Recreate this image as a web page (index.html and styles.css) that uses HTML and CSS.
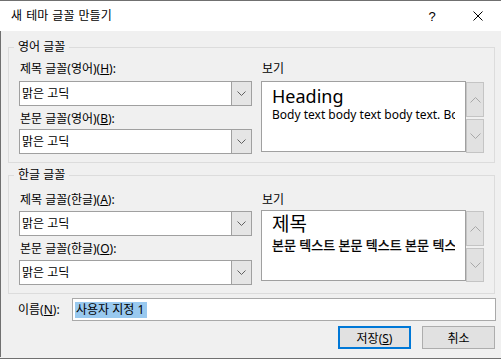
FILE: index.html
```html
<!DOCTYPE html>
<html lang="ko">
<head>
  <meta charset="UTF-8">
  <title>새 테마 글꼴 만들기</title>
  <link rel="stylesheet" href="styles.css">
</head>
<body>
  <div class="dialog">
    <div class="titlebar">
      <span class="title">새 테마 글꼴 만들기</span>
      <span class="caption-btn help">?</span>
      <span class="caption-btn close">
        <svg width="10" height="10" viewBox="0 0 10 10"><path d="M0.5 0.5L9.5 9.5M9.5 0.5L0.5 9.5" stroke="#000" stroke-width="1"/></svg>
      </span>
    </div>

    <div class="client">
      <fieldset class="group group-en">
        <legend>영어 글꼴</legend>
        <div class="group-grid">
          <label class="field-label">제목 글꼴(영어)(<u>H</u>):</label>
          <div class="preview-label">보기</div>
          <div class="combo">
            <span class="combo-text">맑은 고딕</span>
            <span class="drop"><svg width="9" height="5" viewBox="0 0 9 5"><path d="M0.5 0.5L4.5 4.5L8.5 0.5" fill="none" stroke="#606060"/></svg></span>
          </div>
          <div class="preview-row">
            <div class="preview">
              <div class="pv-heading">Heading</div>
              <div class="pv-body">Body text body text body text. Body text body text.</div>
            </div>
            <div class="spin">
              <div class="spin-btn up"><svg width="11" height="6" viewBox="0 0 11 6"><path d="M0.5 5.5L5.5 0.5L10.5 5.5" fill="none" stroke="#a8a8a8"/></svg></div>
              <div class="spin-btn down"><svg width="11" height="6" viewBox="0 0 11 6"><path d="M0.5 0.5L5.5 5.5L10.5 0.5" fill="none" stroke="#a8a8a8"/></svg></div>
            </div>
          </div>
          <label class="field-label second">본문 글꼴(영어)(<u>B</u>):</label>
          <div class="combo">
            <span class="combo-text">맑은 고딕</span>
            <span class="drop"><svg width="9" height="5" viewBox="0 0 9 5"><path d="M0.5 0.5L4.5 4.5L8.5 0.5" fill="none" stroke="#606060"/></svg></span>
          </div>
        </div>
      </fieldset>

      <fieldset class="group group-ko">
        <legend>한글 글꼴</legend>
        <div class="group-grid">
          <label class="field-label">제목 글꼴(한글)(<u>A</u>):</label>
          <div class="preview-label">보기</div>
          <div class="combo">
            <span class="combo-text">맑은 고딕</span>
            <span class="drop"><svg width="9" height="5" viewBox="0 0 9 5"><path d="M0.5 0.5L4.5 4.5L8.5 0.5" fill="none" stroke="#606060"/></svg></span>
          </div>
          <div class="preview-row">
            <div class="preview">
              <div class="pv-heading ko">제목</div>
              <div class="pv-body ko">본문 텍스트 본문 텍스트 본문 텍스트</div>
            </div>
            <div class="spin">
              <div class="spin-btn up"><svg width="11" height="6" viewBox="0 0 11 6"><path d="M0.5 5.5L5.5 0.5L10.5 5.5" fill="none" stroke="#a8a8a8"/></svg></div>
              <div class="spin-btn down"><svg width="11" height="6" viewBox="0 0 11 6"><path d="M0.5 0.5L5.5 5.5L10.5 0.5" fill="none" stroke="#a8a8a8"/></svg></div>
            </div>
          </div>
          <label class="field-label second">본문 글꼴(한글)(<u>O</u>):</label>
          <div class="combo">
            <span class="combo-text">맑은 고딕</span>
            <span class="drop"><svg width="9" height="5" viewBox="0 0 9 5"><path d="M0.5 0.5L4.5 4.5L8.5 0.5" fill="none" stroke="#606060"/></svg></span>
          </div>
        </div>
      </fieldset>

      <div class="name-row">
        <label class="name-label">이름(<u>N</u>):</label>
        <div class="name-input"><span class="selected">사용자 지정 1</span></div>
      </div>

      <div class="button-row">
        <button class="btn default">저장(<u>S</u>)</button>
        <button class="btn">취소</button>
      </div>
    </div>
  </div>
</body>
</html>
```

FILE: styles.css
```css
body {
  margin: 0;
  padding: 0;
  background-color: #f0f0f0;
  font-family: "Noto Sans", "Noto Sans CJK KR", sans-serif;
  font-size: 12px;
  color: #000;
}

.dialog {
  width: 501px;
  height: 357px;
  border-top: 1px solid #707070;
  border-bottom: 1px solid #707070;
  background-color: #f0f0f0;
  overflow: hidden;
}

.titlebar {
  display: flex;
  align-items: center;
  height: 30px;
  background-color: #fff;
}

.title {
  flex: 1;
  padding-left: 11px;
  line-height: 30px;
  word-spacing: 1px;
}

.caption-btn {
  width: 46px;
  height: 30px;
  display: flex;
  align-items: center;
  justify-content: center;
}

.help {
  font-family: "Liberation Sans", sans-serif;
  font-size: 13px;
}

.client {
  height: 326px;
  border-left: 1px solid #707070;
  padding: 8px 0 0 7px;
  box-sizing: border-box;
}

.group {
  margin: 0;
  width: 487px;
  box-sizing: border-box;
  border: 1px solid #dcdcdc;
  padding: 0 10px 8px 10px;
  min-width: 0;
}

.group legend {
  margin-left: -5px;
  padding: 0 4px;
  line-height: 16px;
}

.group-ko {
  margin-top: 4px;
}

.group-grid {
  display: grid;
  grid-template-columns: 233px 223px;
  column-gap: 9px;
  align-items: start;
}

.field-label,
.preview-label {
  line-height: 16px;
  padding-left: 1px;
}

.group-en .group-grid {
  padding-top: 6px;
}

.group-ko .group-grid {
  padding-top: 9px;
}

.group-en .field-label,
.group-en .preview-label {
  margin-bottom: 4px;
}

.group-ko .field-label,
.group-ko .preview-label {
  margin-bottom: 3px;
}

.field-label.second {
  margin-top: 5px;
  margin-bottom: 2px;
}

.group-ko .field-label.second {
  margin-bottom: 3px;
}

.preview-row {
  grid-row: span 3;
  display: flex;
}

.group-ko .preview-row {
  margin-top: -1px;
}

.combo {
  display: flex;
  height: 25px;
  box-sizing: border-box;
  border: 1px solid #a0a0a0;
  background-color: #fff;
}

.combo-text {
  flex: 1;
  padding-left: 2px;
  line-height: 23px;
}

.drop {
  width: 19px;
  display: flex;
  align-items: center;
  justify-content: center;
  background-color: #e5e5e5;
  border-left: 1px solid #a0a0a0;
}

.preview {
  width: 205px;
  height: 71px;
  box-sizing: border-box;
  border: 1px solid #a0a0a0;
  background-color: #fff;
  padding: 3px 0 0 10px;
  overflow: hidden;
}

.pv-heading {
  font-size: 18px;
  line-height: 22px;
  white-space: nowrap;
}

.pv-heading.ko {
  font-size: 19px;
  line-height: 24px;
  margin-top: -2px;
}

.pv-body {
  font-size: 12px;
  line-height: 16px;
  white-space: nowrap;
  overflow: hidden;
  width: 183px;
}

.pv-body.ko {
  font-size: 13px;
  line-height: 18px;
  -webkit-text-stroke: 0.3px #000;
}

.spin {
  display: flex;
  flex-direction: column;
  gap: 2px;
  margin-top: 1px;
}

.spin-btn {
  width: 18px;
  box-sizing: border-box;
  border: 1px solid #c4c4c4;
  background-color: #e1e1e1;
  display: flex;
  align-items: center;
  justify-content: center;
}

.spin-btn.up {
  height: 35px;
}

.spin-btn.down {
  height: 34px;
}

.name-row {
  display: flex;
  align-items: center;
  margin-top: 4px;
}

.name-label {
  width: 64px;
  box-sizing: border-box;
  padding-left: 10px;
  line-height: 16px;
}

.name-input {
  width: 424px;
  height: 23px;
  box-sizing: border-box;
  border: 1px solid #a9a9a9;
  background-color: #fff;
  padding: 2px 0 0 2px;
}

.selected {
  display: inline-block;
  background-color: #99c9ef;
  line-height: 16px;
  padding: 0 3px 0 1px;
}

.button-row {
  display: flex;
  justify-content: flex-end;
  gap: 11px;
  margin-top: 5px;
  padding-right: 6px;
}

.btn {
  width: 73px;
  height: 23px;
  margin: 0;
  padding: 0;
  font-family: "Noto Sans", "Noto Sans CJK KR", sans-serif;
  font-size: 12px;
  color: #000;
  background-color: #e1e1e1;
  border: 1px solid #adadad;
}

.btn.default {
  border: 2px solid #0078d7;
}
```
